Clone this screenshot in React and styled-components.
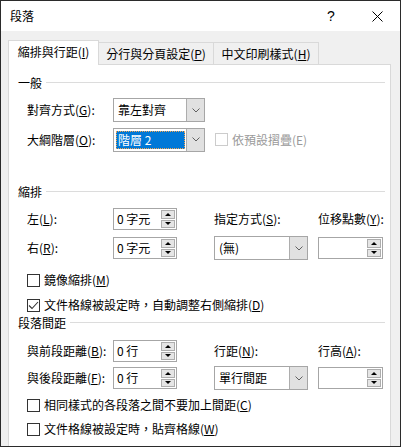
import React from 'react';
import styled, { createGlobalStyle } from 'styled-components';

const Global = createGlobalStyle`
  html, body { margin: 0; padding: 0; background: #fff; }
  body {
    font-family: "Noto Sans CJK TC", "Noto Sans", sans-serif;
    font-size: 12px;
    color: #000;
  }
  u { text-underline-offset: 1px; }
`;

const Window = styled.div`
  width: 401px;
  height: 447px;
  box-sizing: border-box;
  border: 1px solid #2b2b2b;
  background: #f0f0f0;
  display: flex;
  flex-direction: column;
  overflow: hidden;
`;

const TitleBar = styled.div`
  height: 30px;
  flex-shrink: 0;
  background: #fff;
  display: flex;
  align-items: center;
  padding-left: 9px;
`;

const Title = styled.div`
  flex: 1;
  line-height: 16px;
`;

const TitleButton = styled.div`
  width: 46px;
  height: 30px;
  display: flex;
  align-items: center;
  justify-content: center;
  font-family: "Liberation Sans", sans-serif;
  font-size: 14px;
`;

const Body = styled.div`
  flex: 1;
  display: flex;
  flex-direction: column;
  padding: 9px 9px 0 7px;
`;

const TabRow = styled.div`
  display: flex;
  align-items: flex-end;
  height: 24px;
`;

const Tab = styled.div`
  box-sizing: border-box;
  width: ${p => p.$w}px;
  height: ${p => (p.$active ? 25 : 22)}px;
  margin-bottom: ${p => (p.$active ? -1 : 0)}px;
  position: relative;
  z-index: ${p => (p.$active ? 1 : 0)};
  background: ${p => (p.$active ? '#fff' : '#f0f0f0')};
  border: 1px solid #d9d9d9;
  border-bottom: none;
  border-left: ${p => (p.$noLeft ? 'none' : '1px solid #d9d9d9')};
  display: flex;
  align-items: center;
  justify-content: center;
  line-height: 16px;
  white-space: nowrap;
  padding-bottom: ${p => (p.$active ? 2 : 0)}px;
`;

const Panel = styled.div`
  flex: 1;
  background: #fff;
  border: 1px solid #d9d9d9;
  border-bottom: none;
  padding: 10px 5px 0 9px;
  display: flex;
  flex-direction: column;
`;

const SectionHeader = styled.div`
  display: flex;
  align-items: center;
  gap: 4px;
  height: 16px;
  line-height: 16px;
  margin-top: ${p => p.$top || 0}px;
`;

const SectionLine = styled.div`
  flex: 1;
  height: 1px;
  background: #dcdcdc;
  margin-top: -1px;
`;

const FieldRow = styled.div`
  display: grid;
  grid-template-columns: 86px 101px 104px 65px;
  align-items: center;
  padding-left: 9px;
  height: ${p => p.$h}px;
  margin-top: ${p => p.$top}px;
  line-height: 16px;
  white-space: nowrap;
`;

const Label = styled.div`
  color: ${p => (p.$disabled ? '#9a9a9a' : '#000')};
`;

const Combo = styled.div`
  box-sizing: border-box;
  width: ${p => p.$w}px;
  height: 24px;
  border: 1px solid #a6a6a6;
  background: #fff;
  display: flex;
  align-items: stretch;
`;

const ComboText = styled.div`
  flex: 1;
  display: flex;
  align-items: center;
  padding-left: 4px;
`;

const ComboFocus = styled.div`
  flex: 1;
  margin: 2px 1px 2px 2px;
  box-sizing: border-box;
  background: #0078d7;
  color: #fff;
  border: 1px dotted #f3a552;
  display: flex;
  align-items: center;
  padding-left: 1px;
`;

const ComboButton = styled.div`
  width: 17px;
  background: #e1e1e1;
  border-left: 1px solid #adadad;
  display: flex;
  align-items: center;
  justify-content: center;
`;

const Spin = styled.div`
  box-sizing: border-box;
  width: ${p => p.$w}px;
  height: 22px;
  border: 1px solid #a6a6a6;
  background: #fff;
  display: flex;
`;

const SpinText = styled.div`
  flex: 1;
  display: flex;
  align-items: center;
  padding-left: 3px;
`;

const SpinButtons = styled.div`
  display: flex;
  flex-direction: column;
  gap: 1px;
  padding: 1px;
`;

const SpinButton = styled.div`
  box-sizing: border-box;
  width: 14px;
  flex: 1;
  background: #e5e5e5;
  border: 1px solid #adadad;
  display: flex;
  align-items: center;
  justify-content: center;
`;

const Arrow = styled.div`
  width: 0;
  height: 0;
  border-left: 3px solid transparent;
  border-right: 3px solid transparent;
  ${p => (p.$down ? 'border-top: 3px solid #000;' : 'border-bottom: 3px solid #000;')}
`;

const CheckRow = styled.label`
  display: flex;
  align-items: center;
  gap: 4px;
  height: 16px;
  line-height: 16px;
  margin-top: ${p => p.$top || 0}px;
  padding-left: ${p => p.$indent || 0}px;
  white-space: nowrap;
  color: ${p => (p.$disabled ? '#9a9a9a' : '#000')};
`;

const Box = styled.div`
  box-sizing: border-box;
  width: 13px;
  height: 13px;
  background: #fff;
  border: 1px solid ${p => (p.$disabled ? '#cccccc' : '#333333')};
  display: flex;
  align-items: center;
  justify-content: center;
  flex-shrink: 0;
`;

const Chevron = () => (
  <svg width="8" height="5" viewBox="0 0 8 5">
    <path d="M0.5 0.5 L4 4 L7.5 0.5" fill="none" stroke="#606060" strokeWidth="1" />
  </svg>
);

const Check = ({ checked, disabled, children, top, indent }) => (
  <CheckRow $top={top} $indent={indent} $disabled={disabled}>
    <Box $disabled={disabled}>
      {checked && (
        <svg width="11" height="11" viewBox="0 0 11 11">
          <path d="M1 5.5 L4 8.5 L10 2" fill="none" stroke="#333" strokeWidth="1.1" />
        </svg>
      )}
    </Box>
    <span>{children}</span>
  </CheckRow>
);

const Select = ({ w, children, focused }) => (
  <Combo $w={w}>
    {focused ? <ComboFocus>{children}</ComboFocus> : <ComboText>{children}</ComboText>}
    <ComboButton>
      <Chevron />
    </ComboButton>
  </Combo>
);

const SpinBox = ({ w, children }) => (
  <Spin $w={w}>
    <SpinText>{children}</SpinText>
    <SpinButtons>
      <SpinButton><Arrow /></SpinButton>
      <SpinButton><Arrow $down /></SpinButton>
    </SpinButtons>
  </Spin>
);

const Section = ({ title, top }) => (
  <SectionHeader $top={top}>
    <span>{title}</span>
    <SectionLine />
  </SectionHeader>
);

export default function App() {
  return (
    <>
      <Global />
      <Window>
        <TitleBar>
          <Title>段落</Title>
          <TitleButton>?</TitleButton>
          <TitleButton>
            <svg width="11" height="11" viewBox="0 0 11 11">
              <path d="M0.5 0.5 L10.5 10.5 M10.5 0.5 L0.5 10.5" stroke="#000" strokeWidth="1" />
            </svg>
          </TitleButton>
        </TitleBar>
        <Body>
          <TabRow>
            <Tab $active $w={91}>縮排與行距(<u>I</u>)</Tab>
            <Tab $w={115} $noLeft>分行與分頁設定(<u>P</u>)</Tab>
            <Tab $w={105} $noLeft>中文印刷樣式(<u>H</u>)</Tab>
          </TabRow>
          <Panel>
            <Section title="一般" />
            <FieldRow $top={7} $h={24}>
              <Label>對齊方式(<u>G</u>):</Label>
              <Select w={92}>靠左對齊</Select>
            </FieldRow>
            <FieldRow $top={5} $h={25}>
              <Label>大綱階層(<u>O</u>):</Label>
              <Select w={92} focused>階層 2</Select>
              <Check disabled indent={1}>依預設摺疊(E)</Check>
            </FieldRow>

            <Section title="縮排" top={32} />
            <FieldRow $top={8} $h={22}>
              <Label>左(<u>L</u>):</Label>
              <SpinBox w={64}>0 字元</SpinBox>
              <Label>指定方式(<u>S</u>):</Label>
              <Label>位移點數(<u>Y</u>):</Label>
            </FieldRow>
            <FieldRow $top={6} $h={24}>
              <Label>右(<u>R</u>):</Label>
              <SpinBox w={64}>0 字元</SpinBox>
              <Select w={94}>(無)</Select>
              <SpinBox w={65}></SpinBox>
            </FieldRow>
            <Check top={12} indent={9}>鏡像縮排(<u>M</u>)</Check>
            <Check top={9} indent={9} checked>文件格線被設定時，自動調整右側縮排(<u>D</u>)</Check>

            <Section title="段落間距" top={2} />
            <FieldRow $top={9} $h={22}>
              <Label>與前段距離(<u>B</u>):</Label>
              <SpinBox w={64}>0 行</SpinBox>
              <Label>行距(<u>N</u>):</Label>
              <Label>行高(<u>A</u>):</Label>
            </FieldRow>
            <FieldRow $top={4} $h={24}>
              <Label>與後段距離(<u>F</u>):</Label>
              <SpinBox w={64}>0 行</SpinBox>
              <Select w={94}>單行間距</Select>
              <SpinBox w={65}></SpinBox>
            </FieldRow>
            <Check top={7} indent={9}>相同樣式的各段落之間不要加上間距(<u>C</u>)</Check>
            <Check top={8} indent={9}>文件格線被設定時，貼齊格線(<u>W</u>)</Check>
          </Panel>
        </Body>
      </Window>
    </>
  );
}
